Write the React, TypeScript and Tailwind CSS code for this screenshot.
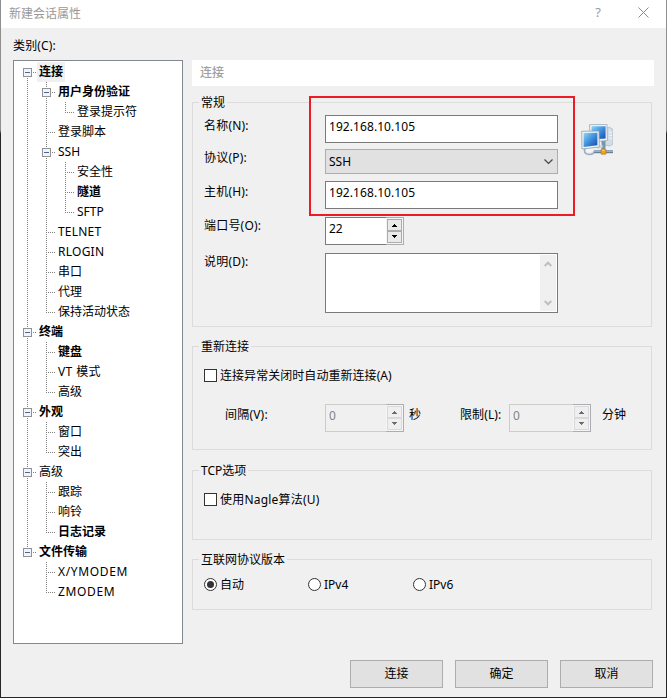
import type { ReactNode } from 'react';

interface TreeNode {
  label: string;
  bold?: boolean;
  selected?: boolean;
  tracking?: string;
  children?: TreeNode[];
}

const CATEGORIES: TreeNode[] = [
  {
    label: '连接',
    bold: true,
    selected: true,
    children: [
      { label: '用户身份验证', bold: true, children: [{ label: '登录提示符' }] },
      { label: '登录脚本' },
      {
        label: 'SSH',
        children: [{ label: '安全性' }, { label: '隧道', bold: true }, { label: 'SFTP' }],
      },
      { label: 'TELNET', tracking: 'tracking-[0.2px]' },
      { label: 'RLOGIN', tracking: 'tracking-[0.25px]' },
      { label: '串口' },
      { label: '代理' },
      { label: '保持活动状态' },
    ],
  },
  {
    label: '终端',
    bold: true,
    children: [
      { label: '键盘', bold: true },
      { label: 'VT 模式', tracking: 'tracking-[0.4px]' },
      { label: '高级' },
    ],
  },
  { label: '外观', bold: true, children: [{ label: '窗口' }, { label: '突出' }] },
  {
    label: '高级',
    children: [{ label: '跟踪' }, { label: '响铃' }, { label: '日志记录', bold: true }],
  },
  {
    label: '文件传输',
    bold: true,
    children: [
      { label: 'X/YMODEM', tracking: 'tracking-[0.65px]' },
      { label: 'ZMODEM', tracking: 'tracking-[0.65px]' },
    ],
  },
];

interface GuideProps {
  up?: boolean;
  down?: boolean;
  branch?: boolean;
  toggle?: boolean;
}

// One 19x20 cell of the dotted tree lines
function Guide({ up, down, branch, toggle }: GuideProps) {
  return (
    <svg width="19" height="20" className="shrink-0" shapeRendering="crispEdges">
      <g stroke="#808080" strokeDasharray="1 1">
        {up && <path d="M9.5 0V10" />}
        {down && <path d="M9.5 10V20" />}
        {branch && <path d="M9 10.5H18" />}
      </g>
      {toggle && (
        <>
          <rect x="5.5" y="6.5" width="8" height="8" fill="#f4f4f4" stroke="#919191" />
          <path d="M7 10.5H12" stroke="#4b63a7" />
        </>
      )}
    </svg>
  );
}

function TreeRows({ nodes, trail = [] }: { nodes: TreeNode[]; trail?: boolean[] }) {
  return (
    <>
      {nodes.map((node, i) => {
        const last = i === nodes.length - 1;
        return (
          <div key={node.label}>
            <div className="flex h-5">
              {trail.map((open, level) => (
                <Guide key={level} up={open} down={open} />
              ))}
              <Guide
                up={trail.length > 0 || i > 0}
                down={!last}
                branch
                toggle={Boolean(node.children)}
              />
              <span
                className={`px-0.5 leading-5 whitespace-pre ${node.bold ? 'font-bold' : ''} ${
                  node.selected ? 'bg-[#f0f0f0]' : ''
                } ${node.tracking ?? ''}`}
              >
                {node.label}
              </span>
            </div>
            {node.children && <TreeRows nodes={node.children} trail={[...trail, !last]} />}
          </div>
        );
      })}
    </>
  );
}

function Group({ title, className, children }: { title: string; className: string; children: ReactNode }) {
  return (
    <fieldset className={`w-[460px] border border-[#dcdcdc] ${className}`}>
      <legend className="ml-1.5 h-[17px] px-0.5 leading-[17px]">{title}</legend>
      {children}
    </fieldset>
  );
}

function TextBox({ value }: { value: string }) {
  return (
    <div className="h-7 w-[233px] border border-[#7a7a7a] bg-white pl-[3px] leading-[21px] tracking-[0.07px]">
      {value}
    </div>
  );
}

function Arrow({ down, disabled }: { down?: boolean; disabled?: boolean }) {
  return (
    <span
      className={`flex h-3 w-[15px] justify-center border ${down ? 'pt-[3px]' : 'pt-1'} ${
        disabled ? 'border-[#d9d9d9] bg-[#efefef]' : 'border-[#acacac] bg-[#eaeaea]'
      }`}
    >
      <svg width="5" height="3" fill={disabled ? '#6d6d6d' : '#000'} shapeRendering="crispEdges">
        <path d={down ? 'M0 0H5V1H4V2H3V3H2V2H1V1H0Z' : 'M2 0H3V1H4V2H5V3H0V2H1V1H2Z'} />
      </svg>
    </span>
  );
}

function Spinner({ value, disabled, wide }: { value: string; disabled?: boolean; wide?: boolean }) {
  return (
    <div className={`flex h-7 ${wide ? 'w-[82px]' : 'w-[79px]'}`}>
      <div
        className={`flex-1 border border-r-0 pl-[3px] leading-[21px] ${
          disabled ? 'border-[#cccccc] bg-[#f0f0f0] text-[#838383]' : 'border-[#7a7a7a] bg-white'
        }`}
      >
        {value}
      </div>
      <div className="flex w-[18px] flex-col border border-l-0 border-[#abadb3] bg-[#f5f5f5] pt-px pl-px">
        <Arrow disabled={disabled} />
        <Arrow down disabled={disabled} />
      </div>
    </div>
  );
}

function Checkbox({ label, className }: { label: string; className?: string }) {
  return (
    <label className="flex">
      <span className="mt-0.5 mr-[3px] size-[13px] border border-[#333333] bg-white" />
      <span className={`leading-[18px] ${className ?? ''}`}>{label}</span>
    </label>
  );
}

function Radio({ label, checked, className }: { label: string; checked?: boolean; className?: string }) {
  return (
    <label className={`flex ${className ?? ''}`}>
      <span className="mt-0.5 mr-[3px] flex size-[13px] items-center justify-center rounded-full border border-[#333333] bg-white">
        {checked && <span className="size-[7px] rounded-full bg-[#333333]" />}
      </span>
      <span className="leading-[18px]">{label}</span>
    </label>
  );
}

function NetworkIcon() {
  return (
    <svg width="32" height="32" viewBox="0 0 32 32">
      <defs>
        <linearGradient id="screen" x1="0" y1="0" x2="1" y2="1">
          <stop offset="0" stopColor="#8ad6f7" />
          <stop offset="0.5" stopColor="#3f8fdc" />
          <stop offset="1" stopColor="#1746ad" />
        </linearGradient>
      </defs>
      <path d="M25 4L29 3.5L32 5.5V20L29 22L23 21Z" fill="#d3dde6" stroke="#a3b5c4" strokeWidth="0.7" />
      <path d="M28 8L31 8.5M28 11L31 11.5M28 14L31 14.5" stroke="#f7fafc" />
      <path d="M8.5 0.7L26 0.4L26.5 16.5L9 18Z" fill="#eef3f6" stroke="#9aabb8" strokeWidth="0.8" />
      <path d="M10.5 2.3H24.6V14.5L10.5 15.6Z" fill="url(#screen)" />
      <path d="M20.5 17H24.5V25H20.5Z" fill="#7797ad" />
      <path d="M15 23L21 20.5L22 23L17 25Z" fill="#cbd9dc" />
      <path d="M4 24.5C2.5 27 3.5 30.5 8 30.5C11.5 30.5 13.5 29 13 27" fill="#e9edf0" stroke="#9cabb5" strokeWidth="1.6" />
      <path d="M6 24H11V28H6Z" fill="#f2f4f5" />
      <path d="M0.7 7.3L18 7L18.3 23L1 25Z" fill="#f1f5f7" stroke="#8d9dab" strokeWidth="0.8" />
      <path d="M2.6 9.1L16.4 8.8V21.2L2.6 23Z" fill="url(#screen)" />
      <path d="M13 27.7H32" stroke="#64839b" strokeWidth="3" />
      <path d="M13 27.2H32" stroke="#b4c7d5" />
      <rect x="20" y="25.2" width="5" height="5" rx="0.6" fill="#f6a313" stroke="#c96f12" strokeWidth="0.7" />
      <path d="M21.3 26.4H23.4" stroke="#ffdc6a" />
    </svg>
  );
}

function DialogButton({ children }: { children: ReactNode }) {
  return (
    <button className="h-7 w-[93px] border border-[#adadad] bg-[#e1e1e1] leading-[26px]">{children}</button>
  );
}

export default function App() {
  return (
    <div className="flex h-[698px] w-[667px] overflow-hidden bg-[#f0f0f0] font-['Noto_Sans','Noto_Sans_CJK_SC',sans-serif] text-[12px] text-black">
      <div className="w-px bg-linear-to-b from-[#8f8f8f] from-[130px] to-[#252529] to-[134px]" />
      <div className="flex flex-1 flex-col border-b border-[#252529]">
        <header className="flex h-7 items-center bg-white pl-2 text-[#999999]">
          <span className="flex-1 leading-[26px]">新建会话属性</span>
          <span className="mr-[37px] pb-[3px] text-[13px]">?</span>
          <svg width="11" height="11" className="mr-[17px] mb-[3px]" stroke="#8a8a8a">
            <path d="M0.5 0.5L10.5 10.5M10.5 0.5L0.5 10.5" />
          </svg>
        </header>

        <div className="mt-[9px] ml-3 h-[18px] leading-[18px] tracking-[0.15px]">类别(C):</div>

        <main className="mt-[5px] ml-3 flex">
          <nav className="h-[584px] w-[170px] border border-[#828790] bg-white pt-px pl-1">
            <TreeRows nodes={CATEGORIES} />
          </nav>

          <section className="relative ml-[9px] w-[462px]">
            <h2 className="mb-2 h-[26px] bg-white pl-2 leading-[26px] font-medium text-[#a0a0a0]">连接</h2>

            <Group title="常规" className="h-[233px]">
              <div className="flex pl-[11px]">
                <div className="flex w-[121px] flex-col leading-[18px] tracking-[0.2px]">
                  <span className="mt-1.5">名称(N):</span>
                  <span className="mt-3.5">协议(P):</span>
                  <span className="mt-4">主机(H):</span>
                  <span className="mt-4">端口号(O):</span>
                  <span className="mt-[18px]">说明(D):</span>
                </div>
                <div className="mt-1">
                  <TextBox value="192.168.10.105" />
                  <div className="mt-1.5 mb-[7px] flex h-[25px] items-center justify-between border border-[#adadad] bg-[#e1e1e1] pr-1 pl-[3px]">
                    <span>SSH</span>
                    <svg width="9" height="6" fill="none" stroke="#444444" strokeWidth="1.2">
                      <path d="M0.5 0.5L4.5 4.5L8.5 0.5" />
                    </svg>
                  </div>
                  <TextBox value="192.168.10.105" />
                  <div className="mt-2 mb-2">
                    <Spinner value="22" />
                  </div>
                  <div className="flex h-[60px] justify-end border border-[#7a7a7a] bg-white p-px">
                    <div className="flex w-4 flex-col items-center justify-between bg-[#f0f0f0] pt-1.5 pb-[5px]">
                      <svg width="8" height="6" fill="none" stroke="#bfbfbf" strokeWidth="2">
                        <path d="M0.7 5L4 1.7L7.3 5" />
                      </svg>
                      <svg width="8" height="6" fill="none" stroke="#bfbfbf" strokeWidth="2">
                        <path d="M0.7 1L4 4.3L7.3 1" />
                      </svg>
                    </div>
                  </div>
                </div>
                <div className="mt-[13px] ml-[23px]">
                  <NetworkIcon />
                </div>
              </div>
            </Group>

            <Group title="重新连接" className="mt-[11px] h-28">
              <div className="mt-3 pl-[11px]">
                <Checkbox label="连接异常关闭时自动重新连接(A)" className="tracking-[0.05px]" />
              </div>
              <div className="mt-[19px] flex leading-[22px]">
                <span className="ml-8 w-[100px] tracking-[0.2px]">间隔(V):</span>
                <Spinner value="0" disabled />
                <span className="ml-[5px] w-[51px]">秒</span>
                <span className="w-[49px] tracking-[0.1px]">限制(L):</span>
                <Spinner value="0" disabled wide />
                <span className="ml-[11px]">分钟</span>
              </div>
            </Group>

            <Group title="TCP选项" className="mt-3 h-[78px]">
              <div className="mt-3 pl-[11px]">
                <Checkbox label="使用Nagle算法(U)" className="tracking-[0.2px]" />
              </div>
            </Group>

            <Group title="互联网协议版本" className="mt-[11px] h-[59px]">
              <div className="mt-2 flex pl-[11px]">
                <Radio label="自动" checked className="w-[104px]" />
                <Radio label="IPv4" className="w-[105px]" />
                <Radio label="IPv6" />
              </div>
            </Group>

            {/* highlight over the name / protocol / host fields */}
            <div className="pointer-events-none absolute top-9 left-[117px] h-[120px] w-[266px] border-2 border-[#ed1c24]" />
          </section>
        </main>

        <footer className="mt-4 mr-[13px] flex justify-end gap-3">
          <DialogButton>连接</DialogButton>
          <DialogButton>确定</DialogButton>
          <DialogButton>取消</DialogButton>
        </footer>
      </div>
      <div className="w-px bg-linear-to-b from-[#8f8f8f] from-[130px] to-[#252529] to-[134px]" />
    </div>
  );
}
